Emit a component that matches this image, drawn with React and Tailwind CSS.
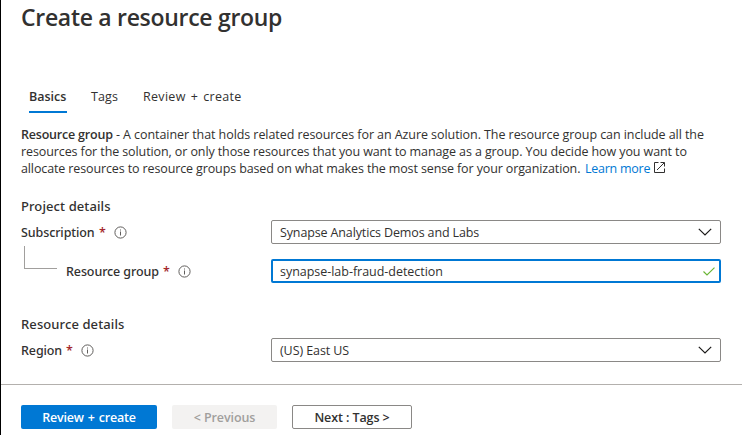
import React from "react";

function Info() {
  return (
    <svg width="13" height="13" viewBox="0 0 13 13" className="shrink-0" fill="none">
      <circle cx="6.5" cy="6.5" r="5.6" stroke="#605e5c" strokeWidth="1" />
      <path d="M6.5 5.5v4M6.5 3.5v1" stroke="#605e5c" strokeWidth="1" />
    </svg>
  );
}

function Chevron() {
  return (
    <svg width="14" height="8" viewBox="0 0 14 8" className="shrink-0" fill="none">
      <path d="M0.8 0.8L7 7L13.2 0.8" stroke="#1b1a19" strokeWidth="1.2" />
    </svg>
  );
}

function Check() {
  return (
    <svg width="12" height="9" viewBox="0 0 12 9" className="shrink-0" fill="none">
      <path d="M0.5 4.5L4 8L11.5 0.6" stroke="#6bb536" strokeWidth="1.2" />
    </svg>
  );
}

function Label({ children, className }) {
  return (
    <div className="flex items-center">
      <span className={"font-['Noto_Sans','Open_Sans',sans-serif] font-medium " + className}>{children}</span>
      <span className="w-[6px] font-semibold text-[#a4262c]">*</span>
      <span className="ml-[9px]">
        <Info />
      </span>
    </div>
  );
}

function Select({ children, className }) {
  return (
    <div className="flex h-6 w-[450px] items-center justify-between rounded-[2px] border border-[#8a8886] pr-[8px] pl-[8px]">
      <span className={className}>{children}</span>
      <Chevron />
    </div>
  );
}

export default function App() {
  return (
    <div className="flex h-[435px] w-[742px] flex-col overflow-hidden border-l border-black bg-white font-['Open_Sans','Noto_Sans',sans-serif] text-[12.5px] leading-[17px] whitespace-nowrap text-[#323130]">
      <main className="flex h-[384px] flex-col pl-5">
        <h1 className="h-[34px] text-[23px] leading-[34px] font-semibold tracking-[-0.3px]">Create a resource group</h1>
        <nav className="mt-[52px] flex h-[27px] gap-6 pl-2 leading-[22px]">
          <span className="h-[27px] w-[38px] border-b-2 border-[#0078d4] font-semibold">Basics</span>
          <span className="w-[28px] tracking-[0.1px]">Tags</span>
          <span className="tracking-[0.3px] [word-spacing:1.5px]">Review + create</span>
        </nav>
        <div className="mt-[13px]">
          <div className="tracking-[-0.07px]">
            <b className="font-semibold tracking-[-0.2px]">Resource group</b> - A container that holds related resources for an Azure solution. The resource group can include all the
          </div>
          <div className="tracking-[-0.1px]">resources for the solution, or only those resources that you want to manage as a group. You decide how you want to</div>
          <div className="flex items-center">
            <span className="w-[560px] tracking-[-0.123px]">allocate resources to resource groups based on what makes the most sense for your organization.</span>
            <span className="ml-[4px] w-[66px] tracking-[-0.25px] text-[#0078d4]">Learn more</span>
            <svg width="11" height="11" viewBox="0 0 11 11" className="ml-[3px] -translate-y-px" fill="none" stroke="#323130">
              <path d="M4.5 0.5H0.5V10.5H10.5V6.5M6.5 0.5H10.5V4.5M10.2 0.8L3 8" />
            </svg>
          </div>
        </div>
        <h2 className="mt-[19px] h-[20px] font-['Noto_Sans','Open_Sans',sans-serif] text-[13px] leading-[20px] font-medium tracking-[0.1px]">Project details</h2>
        <div className="mt-[4px] flex h-6 items-center">
          <div className="w-[250px]">
            <Label className="w-[78px] tracking-[-0.1px]">Subscription</Label>
          </div>
          <Select className="tracking-[-0.13px]">Synapse Analytics Demos and Labs</Select>
        </div>
        <div className="mt-[2px] flex h-[37px] items-end">
          <div className="ml-[3px] h-[23px] w-[33px] self-start border-b border-l border-[#a19f9d]" />
          <div className="ml-[9px] flex h-6 w-[205px] items-center">
            <Label className="w-[97px] tracking-[-0.1px]">Resource group</Label>
          </div>
          <div className="flex h-6 w-[450px] items-center justify-between rounded-[2px] border-2 border-[#0078d4] pr-[4px] pl-[7px]">
            <span className="tracking-[-0.03px]">synapse-lab-fraud-detection</span>
            <Check />
          </div>
        </div>
        <h2 className="mt-[31px] h-[20px] font-['Noto_Sans','Open_Sans',sans-serif] text-[13px] leading-[20px] font-medium tracking-[0.1px]">Resource details</h2>
        <div className="mt-[4px] flex h-6 items-center">
          <div className="w-[250px]">
            <Label className="w-[45px] tracking-[-0.1px]">Region</Label>
          </div>
          <Select className="tracking-[-0.08px]">(US) East US</Select>
        </div>
      </main>
      <footer className="flex gap-[15px] border-t border-[#b3b0ad] pt-5 pl-5 font-semibold">
        <button className="h-6 w-[136px] rounded-[2px] bg-[#0078d4] tracking-[-0.2px] text-white [word-spacing:1px]">Review + create</button>
        <button className="h-6 w-[105px] rounded-[2px] bg-[#f3f2f1] tracking-[-0.1px] text-[#a19f9d]">&lt; Previous</button>
        <button className="h-6 w-[120px] rounded-[2px] border border-[#8a8886] tracking-[-0.1px]">Next : Tags &gt;</button>
      </footer>
    </div>
  );
}
